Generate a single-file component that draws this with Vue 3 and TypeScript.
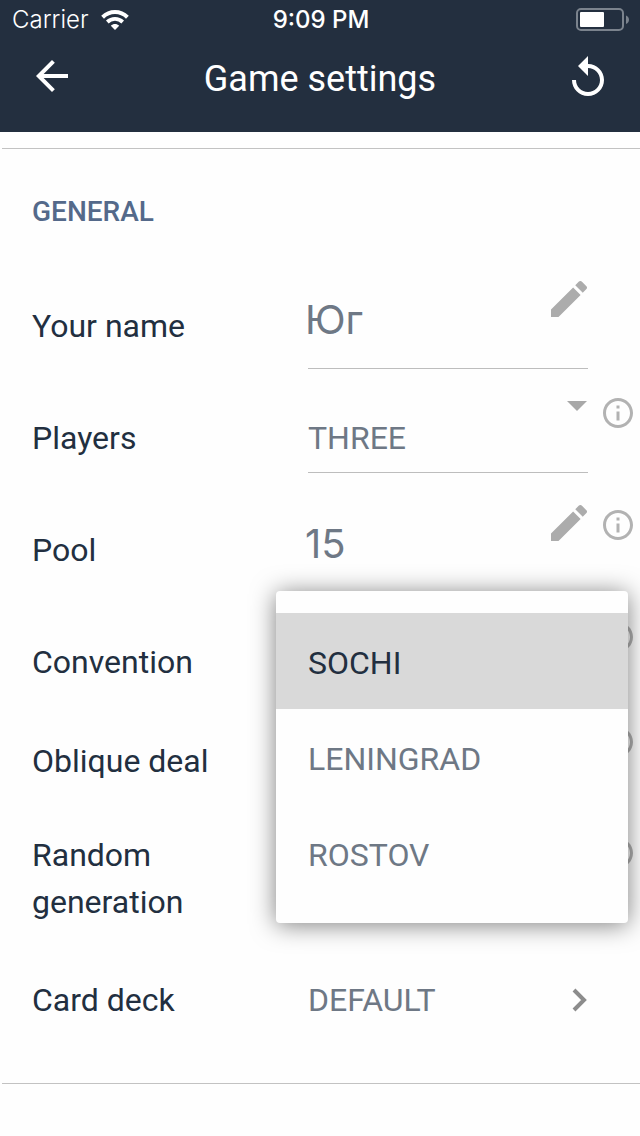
<script setup lang="ts">
import { ref } from 'vue'

const name = ref('Юг')
const players = ref('THREE')
const pool = ref('15')
const oblique = ref(false)
const random = ref(false)
const conventions: string[] = ['SOCHI', 'LENINGRAD', 'ROSTOV']
const convention = ref('SOCHI')
const menuOpen = ref(true)

function choose(value: string): void {
  convention.value = value
  menuOpen.value = false
}

const pencil =
  'M3 17.25V21h3.75L17.81 9.94l-3.75-3.75L3 17.25zM20.71 7.04c.39-.39.39-1.02 0-1.41l-2.34-2.34c-.39-.39-1.02-.39-1.41 0l-1.83 1.83 3.75 3.75 1.83-1.83z'
const info =
  'M11 17h2v-6h-2v6zm1-15C6.48 2 2 6.48 2 12s4.48 10 10 10 10-4.48 10-10S17.52 2 12 2zm0 18c-4.41 0-8-3.59-8-8s3.59-8 8-8 8 3.59 8 8-3.59 8-8 8zM11 9h2V7h-2v2z'
</script>

<template>
  <div class="screen">
    <header class="top">
      <div class="status">
        <div class="carrier">
          <span>Carrier</span>
          <svg class="wifi" viewBox="0 0 28 20" aria-hidden="true">
            <path d="M1.6 7.2C8.6.4 19.4.4 26.4 7.2" fill="none" stroke="#fff" stroke-width="4" />
            <path d="M6.3 12C10.6 7.9 17.4 7.9 21.7 12" fill="none" stroke="#fff" stroke-width="3.8" />
            <path d="M14 20l-4.2-4.3c2.4-2.2 6-2.2 8.4 0z" fill="#fff" />
          </svg>
        </div>
        <time class="clock">9:09 PM</time>
        <svg class="battery" viewBox="0 0 54 24" aria-hidden="true">
          <rect x="1" y="1" width="46" height="21" rx="4" fill="none" stroke="#7b838d" stroke-width="2" />
          <rect x="4" y="4" width="24" height="15" rx="1" fill="#fff" />
          <path d="M50 7.5c4 1.5 4 7 0 8.500z" fill="#7b838d" />
        </svg>
      </div>
      <nav class="bar">
        <button class="icon-btn" type="button" aria-label="Back">
          <svg viewBox="0 1 24 24"><path d="M20 11H7.830l5.590-5.590L12 4l-8 8 8 8 1.410-1.410L7.830 13H20v-2z" /></svg>
        </button>
        <h1>Game settings</h1>
        <button class="icon-btn" type="button" aria-label="Reset">
          <svg viewBox="0 0 24 24"><path d="M12 5V1L7 6l5 5V7c3.310 0 6 2.690 6 6s-2.690 6-6 6-6-2.690-6-6H4c0 4.420 3.580 8 8 8s8-3.580 8-8-3.580-8-8-8z" /></svg>
        </button>
      </nav>
    </header>

    <main class="section">
      <h2>GENERAL</h2>

      <div class="row">
        <label for="name">Your name</label>
        <div class="field">
          <input id="name" v-model="name" class="entry" type="text" />
          <svg class="pencil" viewBox="3 3 18 18" aria-hidden="true"><path :d="pencil" /></svg>
        </div>
      </div>

      <div class="row">
        <label for="players">Players</label>
        <div class="field">
          <select id="players" v-model="players" class="value">
            <option>THREE</option>
          </select>
          <svg class="caret" viewBox="0 0 20 10" aria-hidden="true"><path d="M0 0h20L10 10z" /></svg>
        </div>
        <button class="info" type="button" aria-label="About players">
          <svg viewBox="2 2 20 20"><path :d="info" /></svg>
        </button>
      </div>

      <div class="row">
        <label for="pool">Pool</label>
        <div class="field">
          <input id="pool" v-model="pool" class="entry" type="text" inputmode="numeric" />
          <svg class="pencil" viewBox="3 3 18 18" aria-hidden="true"><path :d="pencil" /></svg>
        </div>
        <button class="info" type="button" aria-label="About pool">
          <svg viewBox="2 2 20 20"><path :d="info" /></svg>
        </button>
      </div>

      <div class="row">
        <label for="convention">Convention</label>
        <div class="anchor">
          <button
            id="convention"
            class="value trigger"
            type="button"
            aria-haspopup="listbox"
            :aria-expanded="menuOpen"
            @click="menuOpen = !menuOpen"
          >
            <span v-if="!menuOpen">{{ convention }}</span>
          </button>
          <div v-if="menuOpen" class="menu" role="listbox" aria-label="Convention">
            <button
              v-for="item in conventions"
              :key="item"
              type="button"
              role="option"
              class="option"
              :class="{ selected: item === convention }"
              :aria-selected="item === convention"
              @click="choose(item)"
            >
              {{ item }}
            </button>
          </div>
        </div>
        <button class="info" type="button" aria-label="About convention">
          <svg viewBox="2 2 20 20"><path :d="info" /></svg>
        </button>
      </div>

      <div class="row compact">
        <label for="oblique">Oblique deal</label>
        <input id="oblique" v-model="oblique" class="check" type="checkbox" />
        <button class="info" type="button" aria-label="About oblique deal">
          <svg viewBox="2 2 20 20"><path :d="info" /></svg>
        </button>
      </div>

      <div class="row tall">
        <label for="random">Random generation</label>
        <input id="random" v-model="random" class="check" type="checkbox" />
        <button class="info" type="button" aria-label="About random generation">
          <svg viewBox="2 2 20 20"><path :d="info" /></svg>
        </button>
      </div>

      <div class="row last">
        <label for="deck">Card deck</label>
        <button id="deck" class="value link" type="button">
          <span>DEFAULT</span>
          <svg class="chevron" viewBox="0 0 16 24" aria-hidden="true">
            <path d="M2 2l10 10L2 22" fill="none" stroke="#8c8c8c" stroke-width="4" />
          </svg>
        </button>
      </div>
    </main>
  </div>
</template>

<style>
body {
  background: #fefefe;
}
</style>

<style scoped>
.screen {
  min-height: 100vh;
  overflow-x: hidden;
  background: #fefefe;
  color: #222f40;
  font-family: Roboto, "Liberation Sans", sans-serif;
}
button,
input,
select {
  margin: 0;
  padding: 0;
  border: 0;
  background: none;
  font: inherit;
  color: inherit;
}
button {
  cursor: pointer;
}
svg {
  display: block;
  flex: none;
}
h1,
h2 {
  margin: 0;
}
.top {
  padding-bottom: 16px;
  background: #232f3f;
  color: #fff;
}
.status {
  display: grid;
  grid-template-columns: 1fr auto 1fr;
  align-items: center;
  height: 40px;
  padding: 0 10px 0 12px;
  font-family: Inter, "Liberation Sans", sans-serif;
  font-size: 24px;
  line-height: 30px;
}
.carrier {
  display: flex;
  align-items: center;
  gap: 12px;
  font-weight: 300;
}
.wifi {
  width: 28px;
  height: 20px;
}
.clock {
  font-weight: 500;
}
.battery {
  justify-self: end;
  width: 54px;
  height: 24px;
}
.bar {
  display: flex;
  align-items: center;
  justify-content: space-between;
  height: 76px;
  padding: 0 28px;
}
.bar h1 {
  padding-top: 2px;
  font-size: 36px;
  font-weight: 400;
  line-height: 48px;
}
.icon-btn svg {
  width: 48px;
  height: 48px;
  fill: #fff;
}
.section {
  margin: 16px 0 0 2px;
  padding: 45px 7px 37px 30px;
  border-top: 1px solid #c2c2c2;
  border-bottom: 1px solid #c2c2c2;
}
.section h2 {
  margin-bottom: 40px;
  color: #54698a;
  font-size: 28px;
  font-weight: 500;
  line-height: 36px;
}
.row {
  display: grid;
  grid-template-columns: 261px minmax(0, 1fr) 30px;
  column-gap: 15px;
  align-items: start;
  height: 112px;
}
.row label {
  align-self: center;
  font-size: 32px;
  line-height: 47px;
}
.compact {
  height: 86px;
}
.tall {
  height: 150px;
}
.last {
  height: 92px;
}
.tall label {
  padding-right: 60px;
}
.field {
  display: flex;
  align-items: flex-start;
  border-bottom: 1px solid #bdbdbd;
  color: #6e7885;
}
.entry {
  flex: 1;
  width: 0;
  min-width: 0;
  height: 98px;
  margin-left: -3px;
  font-family: Inter, "Liberation Sans", sans-serif;
  font-size: 40px;
  font-weight: 400;
}
.pencil {
  width: 36px;
  height: 36px;
  margin: 11px 1px 0 0;
  fill: #acacac;
}
.value {
  color: #6e7885;
  font-size: 32px;
}
select.value {
  flex: 1;
  min-width: 0;
  height: 90px;
  padding-top: 22px;
  appearance: none;
}
.caret {
  width: 20px;
  height: 10px;
  margin: 19px 1px 0 0;
  fill: #a8a8a8;
}
.info {
  margin-top: 16px;
}
.info svg {
  width: 30px;
  height: 30px;
  fill: #b2b2b2;
}
.compact .info {
  margin-top: 9px;
}
.tall .info {
  margin-top: 34px;
}
.anchor {
  position: relative;
}
.trigger {
  width: 100%;
  height: 90px;
  padding-top: 22px;
  text-align: left;
}
.menu {
  position: absolute;
  z-index: 1;
  top: -15px;
  right: -40px;
  left: -32px;
  padding: 22px 0;
  border-radius: 4px;
  background: #fefefe;
  box-shadow: 0 2px 24px rgba(0, 0, 0, 0.5);
}
.option {
  display: block;
  width: 100%;
  height: 96px;
  padding: 3px 32px 0;
  color: #6e7885;
  font-size: 32px;
  text-align: left;
}
.option.selected {
  background: #d9d9d9;
  color: #222f40;
}
.check {
  align-self: center;
  width: 36px;
  height: 36px;
}
.link {
  display: flex;
  align-items: center;
  align-self: center;
  justify-content: space-between;
  text-align: left;
}
.chevron {
  width: 16px;
  height: 24px;
}
</style>
